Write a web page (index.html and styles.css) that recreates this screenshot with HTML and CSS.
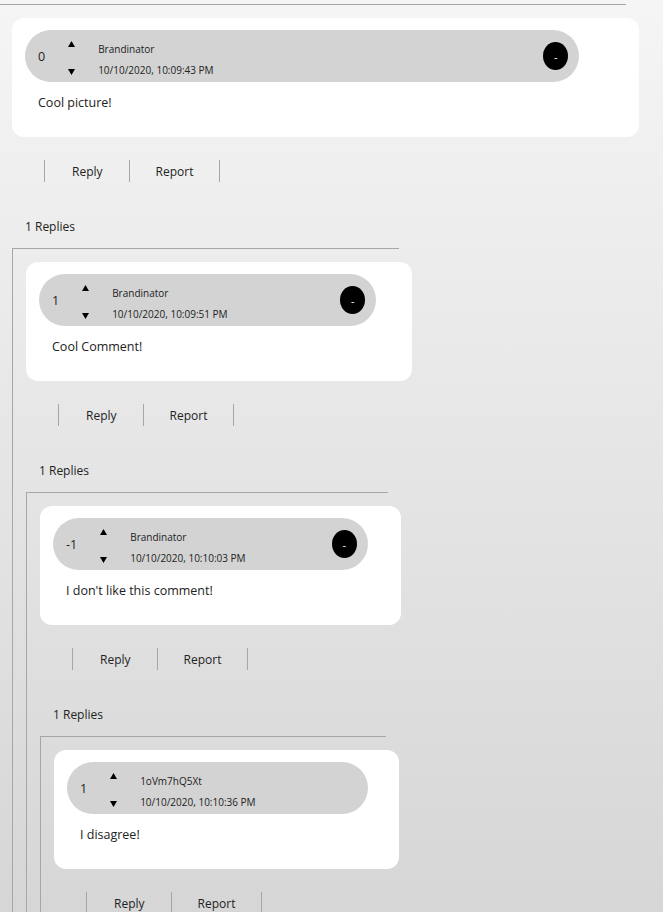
FILE: index.html
```html
<!DOCTYPE html>
<html lang="en">
<head>
<meta charset="utf-8">
<title>Comments</title>
<link rel="stylesheet" href="styles.css">
</head>
<body>
<div class="thread level-0">
  <div class="card">
    <div class="head">
      <span class="score">0</span>
      <div class="votes">
        <svg class="arrow" viewBox="0 0 7 6"><polygon points="3.5,0 7,6 0,6"/></svg>
        <svg class="arrow" viewBox="0 0 7 6"><polygon points="0,0 7,0 3.5,6"/></svg>
      </div>
      <div class="meta"><div class="name">Brandinator</div><div class="date">10/10/2020, 10:09:43 PM</div></div>
      <button class="del">-</button>
    </div>
    <p class="text">Cool picture!</p>
  </div>
  <ul class="actions"><li>Reply</li><li>Report</li></ul>
  <div class="count">1 Replies</div>

  <div class="thread level-1">
    <div class="card">
      <div class="head">
        <span class="score">1</span>
        <div class="votes">
          <svg class="arrow" viewBox="0 0 7 6"><polygon points="3.5,0 7,6 0,6"/></svg>
          <svg class="arrow" viewBox="0 0 7 6"><polygon points="0,0 7,0 3.5,6"/></svg>
        </div>
        <div class="meta"><div class="name">Brandinator</div><div class="date">10/10/2020, 10:09:51 PM</div></div>
        <button class="del">-</button>
      </div>
      <p class="text">Cool Comment!</p>
    </div>
    <ul class="actions"><li>Reply</li><li>Report</li></ul>
    <div class="count">1 Replies</div>

    <div class="thread level-2">
      <div class="card">
        <div class="head">
          <span class="score">-1</span>
          <div class="votes">
            <svg class="arrow" viewBox="0 0 7 6"><polygon points="3.5,0 7,6 0,6"/></svg>
            <svg class="arrow" viewBox="0 0 7 6"><polygon points="0,0 7,0 3.5,6"/></svg>
          </div>
          <div class="meta"><div class="name">Brandinator</div><div class="date">10/10/2020, 10:10:03 PM</div></div>
          <button class="del">-</button>
        </div>
        <p class="text">I don't like this comment!</p>
      </div>
      <ul class="actions"><li>Reply</li><li>Report</li></ul>
      <div class="count">1 Replies</div>

      <div class="thread level-3">
        <div class="card">
          <div class="head">
            <span class="score">1</span>
            <div class="votes">
              <svg class="arrow" viewBox="0 0 7 6"><polygon points="3.5,0 7,6 0,6"/></svg>
              <svg class="arrow" viewBox="0 0 7 6"><polygon points="0,0 7,0 3.5,6"/></svg>
            </div>
            <div class="meta"><div class="name">1oVm7hQ5Xt</div><div class="date">10/10/2020, 10:10:36 PM</div></div>
          </div>
          <p class="text">I disagree!</p>
        </div>
        <ul class="actions"><li>Reply</li><li>Report</li></ul>
      </div>
    </div>
  </div>
</div>
</body>
</html>
```
FILE: styles.css
```css
html {
  height: 100%;
  background: linear-gradient(to bottom, #f5f5f5, #d6d6d6);
}
body {
  margin: 0;
  height: 100%;
  overflow: hidden;
  font-family: "Open Sans", "Noto Sans", sans-serif;
  color: #222;
}
.thread {
  box-sizing: border-box;
  border-top: 1px solid #a6a6a6;
  border-left: 1px solid #a6a6a6;
}
.level-0 { width: 628px; margin: 4px 0 0 -2px; }
.level-1 { width: 387px; margin: 12px 0 0 13px; }
.level-2 { width: 362px; margin: 12px 0 0 13px; }
.level-3 { width: 346px; margin: 12px 0 0 13px; }

.card {
  box-sizing: border-box;
  width: 100%;
  height: 119px;
  margin: 13px 0 0 13px;
  padding-top: 12px;
  background: #fff;
  border-radius: 12px;
}
.head {
  display: flex;
  align-items: center;
  width: calc(90% - 10px);
  height: 52px;
  margin-left: 13px;
  border-radius: 26px;
  background: #d3d3d3;
}
.score {
  margin-left: 13px;
  margin-right: 22px;
  font-size: 12.5px;
}
.votes {
  display: flex;
  flex-direction: column;
  gap: 22px;
  margin-top: 3px;
  margin-left: 1px;
}
.arrow {
  display: block;
  width: 7px;
  height: 6px;
  fill: #000;
}
.meta {
  align-self: flex-start;
  margin-left: 23px;
  padding-top: 9px;
  font-size: 10px;
  line-height: 21px;
}
.del {
  margin: 0 11px 0 auto;
  width: 25px;
  height: 28px;
  padding: 0;
  border: none;
  border-radius: 50%;
  background: #000;
  color: #fff;
  font-family: "Open Sans", sans-serif;
  font-size: 11px;
}
.text {
  margin: 12px 0 0 26px;
  font-size: 12.5px;
  line-height: 18px;
}
.actions {
  display: flex;
  margin: 23px 0 0 45px;
  padding: 0;
  list-style: none;
  font-size: 12px;
  line-height: 20px;
}
.actions li {
  padding: 2px 26px 0;
  border-left: 1px solid #a6a6a6;
}
.actions li:first-child {
  padding-left: 27px;
}
.actions li:last-child {
  border-right: 1px solid #a6a6a6;
}
.count {
  margin: 36px 0 0 26px;
  font-size: 12px;
  line-height: 18px;
}
```
